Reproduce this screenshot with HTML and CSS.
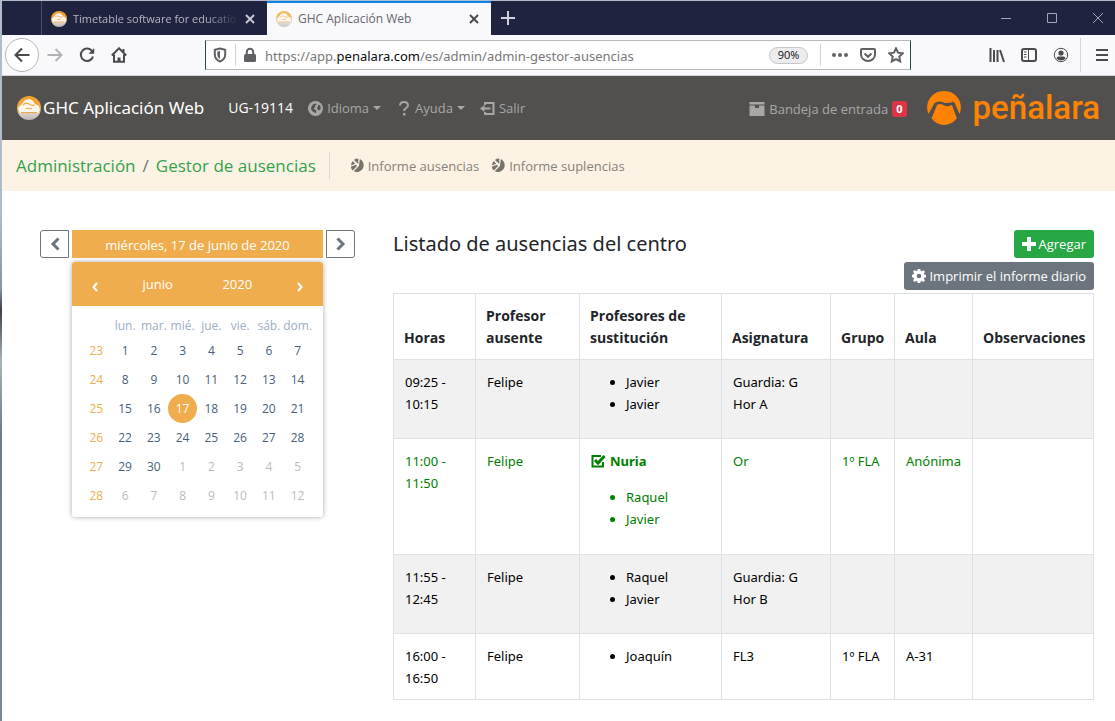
FILE: index.html
```html
<!DOCTYPE html>
<html lang="es">
<head>
<meta charset="utf-8">
<title>GHC Aplicación Web</title>
<link rel="stylesheet" href="styles.css">
</head>
<body>
<svg class="defs" width="0" height="0" aria-hidden="true">
  <defs>
    <linearGradient id="ball" x1="0" y1="0" x2="0" y2="1">
      <stop offset="0" stop-color="#f0a02c"/><stop offset=".5" stop-color="#f2a945"/><stop offset=".75" stop-color="#d9cfc6"/><stop offset="1" stop-color="#b9b6b8"/>
    </linearGradient>
    <symbol id="ghc" viewBox="0 0 24 24">
      <circle cx="12" cy="12" r="12" fill="url(#ball)"/>
      <path d="M1 12l4-4 3-4 5-1 3 2 2 3 4 2 1 4-2 3H3z" fill="#fdf6ea"/>
      <path d="M6 9q3-3 6-1t6 1M9 12.500h6M4 16.500h16" stroke="#efaa4c" stroke-width="1.200" fill="none"/>
    </symbol>
    <symbol id="pie" viewBox="0 0 16 16">
      <path d="M10.500 1A7.200 7.200 0 1 1 4 14.200L9.500 8.500z"/>
      <path d="M8.800 .5v6L4.200 2A7 7 0 0 1 8.800 .5zM3 3.200L5.500 6 1.200 8A6 6 0 0 1 3 3.200zM.8 9.300L6.500 7.200 7.500 8.500 3 13.200A6 6 0 0 1 .8 9.300z"/>
    </symbol>
  </defs>
</svg>
<div class="window">
  <header class="tabs">
    <div class="tab tab-idle">
      <svg class="favicon"><use href="#ghc"/></svg>
      <span class="tab-title">Timetable software for educatio</span>
      <button class="tab-close" aria-label="Cerrar pestaña"><svg width="10" height="10"><path d="M1 1l8 8M9 1l-8 8"/></svg></button>
    </div>
    <div class="tab tab-active">
      <svg class="favicon"><use href="#ghc"/></svg>
      <span class="tab-title">GHC Aplicación Web</span>
      <button class="tab-close" aria-label="Cerrar pestaña"><svg width="10" height="10"><path d="M1 1l8 8M9 1l-8 8"/></svg></button>
    </div>
    <button class="tab-new" aria-label="Nueva pestaña"><svg width="14" height="14"><path d="M7 0v14M0 7h14"/></svg></button>
    <div class="win-controls">
      <button aria-label="Minimizar"><svg width="10" height="10"><path d="M0 5.500h10"/></svg></button>
      <button aria-label="Maximizar"><svg width="10" height="10"><path d="M.5 .5h9v9h-9z"/></svg></button>
      <button aria-label="Cerrar"><svg width="10" height="10"><path d="M0 0l10 10M10 0L0 10"/></svg></button>
    </div>
  </header>

  <div class="toolbar">
    <button class="back" aria-label="Atrás"><svg width="16" height="16"><path d="M15.500 8H1.500M8 1.500L1.500 8 8 14.500"/></svg></button>
    <button class="tool faded" aria-label="Adelante"><svg width="16" height="16"><path d="M.5 8h14M8.500 2l6 6-6 6"/></svg></button>
    <button class="tool" aria-label="Recargar"><svg width="16" height="16"><path d="M13.300 4.500A6.200 6.200 0 1 0 14 9.500"/><path d="M15.200 1v5.800H9.500z" class="solid"/></svg></button>
    <button class="tool" aria-label="Inicio"><svg width="16" height="16"><path d="M.8 8.500L8 1.300l7.200 7.200M3 7.500v7.300h10V7.500"/><path d="M6.500 15v-4.500h3V15zM11.500 2h2v3h-2z" class="solid"/></svg></button>
    <div class="urlbar">
      <svg class="url-shield" width="14" height="16"><path d="M7 1.500l5.200 1.300v4.700c0 3.500-2 5.700-5.200 7-3.200-1.300-5.200-3.500-5.200-7V2.800z"/><path d="M7 4v8c-1.800-.9-2.700-2.500-2.700-4.500V4.600z" class="solid"/></svg>
      <span class="rule"></span>
      <svg class="url-lock" width="14" height="16"><path d="M3.800 8V5a3.200 3.200 0 0 1 6.400 0v3"/><rect x="1" y="7" width="12" height="8" rx="1.500" class="solid"/></svg>
      <span class="url">https://app.<b>penalara.com</b>/es/admin/admin-gestor-ausencias</span>
      <button class="zoom">90%</button>
      <span class="rule"></span>
      <button class="url-tool" aria-label="Más acciones"><svg width="18" height="16"><g class="solid"><circle cx="3" cy="8" r="2"/><circle cx="9" cy="8" r="2"/><circle cx="15" cy="8" r="2"/></g></svg></button>
      <button class="url-tool" aria-label="Pocket"><svg width="16" height="16"><path d="M2 2h12q1 0 1 1v4.500a7 6.500 0 0 1-14 0V3q0-1 1-1zM4.500 6.500L8 9.800l3.500-3.300"/></svg></button>
      <button class="url-tool" aria-label="Marcador"><svg width="16" height="16"><path d="M8 1.300l2 4.400 4.800.6-3.500 3.300.9 4.800L8 12.100l-4.200 2.300.9-4.800L1.200 6.300 6 5.700z"/></svg></button>
    </div>
    <button class="tool" aria-label="Biblioteca"><svg width="16" height="16"><path d="M1.500 1v14M5 3v12M8.500 3v12M11 3l4 12"/></svg></button>
    <button class="tool" aria-label="Barra lateral"><svg width="16" height="16"><rect x="1" y="2" width="14" height="12" rx="2"/><path d="M7.500 2v12M3 5h2.500M3 7.500h2.500M3 10h2.500" class="thin"/></svg></button>
    <button class="tool" aria-label="Cuenta"><svg width="16" height="16"><circle cx="8" cy="8" r="6.700" class="thin"/><circle cx="8" cy="6" r="2.600" class="solid"/><path d="M3.500 11.500q0-2 2-2h5q2 0 2 2A6 6 0 0 1 8 13.500a6 6 0 0 1-4.500-2z" class="solid"/></svg></button>
    <span class="rule rule-tall"></span>
    <button class="tool menu" aria-label="Menú"><svg width="12" height="14"><path d="M0 2h12M0 7h12M0 12h12"/></svg></button>
  </div>

  <nav class="navbar">
    <a class="brand" href="#"><svg class="brand-icon"><use href="#ghc"/></svg>GHC Aplicación Web</a>
    <span class="user">UG-19114</span>
    <button class="nav-link"><svg width="15" height="15" viewBox="0 0 15 15"><circle cx="7.500" cy="7.500" r="7.500" class="ico"/><path d="M5.500 3l2.500-.6.5 1.400-1.600 1-.1 1.700-1.300 1.500 2.800 1.300-.4 3-3-1.800L3 8.500l.5-3zM9.800 3.500l2.400 1 .6 3-1.400 2-2-1.200-.4-2 1.400-1z" class="cut"/></svg><span>Idioma</span><i class="caret"></i></button>
    <button class="nav-link nav-help"><svg width="10" height="15" viewBox="0 0 10 15"><path d="M1 4.500Q1.200 1 5 1t4 3.200Q9 6 6.700 7.300 5.200 8.200 5.200 10" class="line"/><rect x="4" y="12" width="2.500" height="2.500" class="ico"/></svg><span>Ayuda</span><i class="caret"></i></button>
    <a class="nav-link" href="#"><svg width="15" height="13" viewBox="0 0 15 13"><path d="M5 3V1h8.500v11H5v-2M3 6.500h7.500" class="line"/><path d="M4.500 3v7L0 6.500z" class="ico"/></svg><span>Salir</span></a>
    <a class="nav-link inbox" href="#"><svg width="16" height="14" viewBox="0 0 16 14"><path d="M.5 0h15v2.500H.5zM.5 3.500H6V6h4V3.500h5.500V14H.5z" class="ico"/></svg><span>Bandeja de entrada</span><b class="badge">0</b></a>
    <a class="logo" href="#"><svg width="34" height="34" viewBox="0 0 34 34"><path d="M17 0C22 0 27 2 30.500 6.500 34 11 35 17 32.500 23L27.500 11.500 17 12 7.500 12 1.500 23C-1 17 0 11 3.500 6.500 7 2 12 0 17 0z" fill="#ff8300"/><path d="M10 14Q13 12 17 14.200T25 13.500L30 27Q25 34 17 34T4.500 27z" fill="#ff8300"/><path d="M4 26L8.800 12.700Q12.500 10.500 17 12.800T25.500 12L30.500 26" fill="none" stroke="#52504e" stroke-width="2"/></svg><span>peñalara</span></a>
  </nav>

  <nav class="crumbs" aria-label="Ruta">
    <a class="crumb" href="#">Administración</a><span class="slash">/</span><a class="crumb" href="#">Gestor de ausencias</a>
    <span class="crumb-rule"></span>
    <a class="report" href="#"><svg><use href="#pie"/></svg>Informe ausencias</a>
    <a class="report" href="#"><svg><use href="#pie"/></svg>Informe suplencias</a>
  </nav>

  <main class="content">
    <section class="picker">
      <button class="step step-prev" aria-label="Día anterior"><svg width="10" height="14"><path d="M8.500 1.500L3 7l5.500 5.500"/></svg></button>
      <div class="picker-body">
        <button class="date">miércoles, 17 de junio de 2020</button>
        <div class="calendar">
          <div class="cal-head">
            <button aria-label="Mes anterior"><svg width="6" height="10"><path d="M5 1L1.500 5 5 9"/></svg></button>
            <button>junio</button>
            <button>2020</button>
            <button aria-label="Mes siguiente"><svg width="6" height="10"><path d="M1 1l3.500 4L1 9"/></svg></button>
          </div>
          <table class="days">
            <thead><tr><th></th><th>lun.</th><th>mar.</th><th>mié.</th><th>jue.</th><th>vie.</th><th>sáb.</th><th>dom.</th></tr></thead>
            <tbody>
              <tr><th>23</th><td>1</td><td>2</td><td>3</td><td>4</td><td>5</td><td>6</td><td>7</td></tr>
              <tr><th>24</th><td>8</td><td>9</td><td>10</td><td>11</td><td>12</td><td>13</td><td>14</td></tr>
              <tr><th>25</th><td>15</td><td>16</td><td class="today">17</td><td>18</td><td>19</td><td>20</td><td>21</td></tr>
              <tr><th>26</th><td>22</td><td>23</td><td>24</td><td>25</td><td>26</td><td>27</td><td>28</td></tr>
              <tr><th>27</th><td>29</td><td>30</td><td class="out">1</td><td class="out">2</td><td class="out">3</td><td class="out">4</td><td class="out">5</td></tr>
              <tr><th>28</th><td class="out">6</td><td class="out">7</td><td class="out">8</td><td class="out">9</td><td class="out">10</td><td class="out">11</td><td class="out">12</td></tr>
            </tbody>
          </table>
        </div>
      </div>
      <button class="step step-next" aria-label="Día siguiente"><svg width="10" height="14"><path d="M1.500 1.500L7 7l-5.500 5.500"/></svg></button>
    </section>

    <section class="list">
      <div class="list-head">
        <h1>Listado de ausencias del centro</h1>
        <div class="actions">
          <button class="btn btn-add"><svg width="14" height="14"><path d="M5 0h4v5h5v4H9v5H5V9H0V5h5z"/></svg>Agregar</button>
          <button class="btn btn-print"><svg width="14" height="14" viewBox="0 0 14 14"><path fill-rule="evenodd" d="M5.700 0h2.600l.4 1.900 1 .4L11.400 1.200l1.600 1.600-1.100 1.700.4 1 1.700.4v2.400l-1.700.4-.4 1 1.100 1.700-1.600 1.600-1.700-1.100-1 .4-.4 1.700H5.700l-.4-1.700-1-.4-1.700 1.100L1 11.400l1.100-1.700-.4-1L0 8.300V5.700l1.700-.4.4-1L1 2.600 2.600 1l1.700 1.100 1-.4zM7 4.700A2.300 2.300 0 1 0 7 9.300 2.300 2.300 0 0 0 7 4.700z"/></svg>Imprimir el informe diario</button>
        </div>
      </div>
      <table class="absences">
        <colgroup><col class="c-hour"><col class="c-absent"><col class="c-subs"><col class="c-subject"><col class="c-group"><col class="c-room"><col></colgroup>
        <thead><tr><th>Horas</th><th>Profesor ausente</th><th>Profesores de sustitución</th><th>Asignatura</th><th>Grupo</th><th>Aula</th><th>Observaciones</th></tr></thead>
        <tbody>
          <tr><td>09:25 - 10:15</td><td>Felipe</td><td><ul><li>Javier</li><li>Javier</li></ul></td><td>Guardia: G<br>Hor A</td><td></td><td></td><td></td></tr>
          <tr class="assigned"><td>11:00 - 11:50</td><td>Felipe</td><td><p><svg width="15" height="14" viewBox="0 0 15 14"><path d="M10 2H1.500v10.500H12V8"/><path d="M4 6l3 3 6.500-7" class="tick"/></svg>Nuria</p><ul><li>Raquel</li><li>Javier</li></ul></td><td>Or</td><td>1º FLA</td><td>Anónima</td><td></td></tr>
          <tr><td>11:55 - 12:45</td><td>Felipe</td><td><ul><li>Raquel</li><li>Javier</li></ul></td><td>Guardia: G<br>Hor B</td><td></td><td></td><td></td></tr>
          <tr><td>16:00 - 16:50</td><td>Felipe</td><td><ul><li>Joaquín</li></ul></td><td>FL3</td><td>1º FLA</td><td>A-31</td><td></td></tr>
        </tbody>
      </table>
    </section>
  </main>
</div>
</body>
</html>
```
FILE: styles.css
```css
* { box-sizing: border-box; }

body {
  margin: 0;
  background: #fff;
  color: #212529;
  font: 13px/22px "Open Sans", "Noto Sans", sans-serif;
}

button {
  display: inline-flex;
  align-items: center;
  justify-content: center;
  margin: 0;
  padding: 0;
  border: 0;
  background: none;
  color: inherit;
  font: inherit;
}

a { text-decoration: none; }
svg { display: block; flex: none; fill: none; stroke: none; }
.defs { position: absolute; }

.window {
  min-height: 100vh;
  border-left: 2px solid;
  border-image: linear-gradient(#aebccb 0 30%, #8894a0 40%, #3c4249 43%, #a9b4bc 50%, #6f7c85 60%, #7b8a92) 1;
}

/* Tab strip */
.tabs {
  display: flex;
  height: 35px;
  border-top: 1px solid #aebccb;
  background: #20233f;
}
.tab {
  display: flex;
  align-items: center;
  gap: 6px;
  padding: 2px 12px 0 9px;
  font-size: 12px;
}
.tab-idle {
  width: 226px;
  margin-left: 39px;
  border-left: 1px solid #4d4f68;
  color: #b5b5c2;
}
.tab-idle .tab-title {
  font-size: 11px;
  -webkit-mask-image: linear-gradient(90deg, #000 80%, transparent);
  mask-image: linear-gradient(90deg, #000 80%, transparent);
}
.tab-active {
  width: 224px;
  box-shadow: inset 0 2px #1183ea;
  background: #f9f9fb;
  color: #66666c;
}
.tab-title { flex: 1; overflow: hidden; white-space: nowrap; }
.favicon { width: 16px; height: 16px; }
.tab-active .favicon { opacity: .75; }
.tab-close svg, .tab-new svg { stroke: currentColor; stroke-width: 2; }
.tab-idle .tab-close { color: #c8c8d2; }
.tab-active .tab-close { color: #4a4a4f; }
.tab-new { width: 34px; color: #d0d0da; }
.win-controls { display: flex; margin-left: auto; }
.win-controls button { width: 46px; }
.win-controls button:last-child { width: 40px; padding-left: 6px; }
.win-controls svg { stroke: #a5a6b5; }

/* Toolbar */
.toolbar {
  display: flex;
  align-items: center;
  height: 41px;
  padding-left: 3px;
  border-bottom: 1px solid #d6d6da;
  background: #f9f9fb;
}
.toolbar svg { stroke: #4b4b4f; stroke-width: 2; }
.toolbar .solid { fill: #4b4b4f; stroke: none; }
.toolbar .thin { stroke-width: 1; }
.back { width: 34px; height: 34px; border: 1px solid #b5b5b8; border-radius: 50%; background: #fff; }
.tool { width: 32px; height: 32px; }
.tool.menu { width: 26px; }
.faded { opacity: .4; }
.rule { width: 1px; height: 22px; background: #d4d4d8; }
.rule-tall { height: 34px; margin: 0 8px 0 3px; }
.urlbar {
  display: flex;
  flex: 1;
  align-items: center;
  height: 30px;
  margin: 0 70px;
  padding-left: 7px;
  border: 1px solid #b9b9bd;
  border-left-color: #1c4a48;
  border-right-color: #1c4a48;
  background: #fff;
}
.urlbar svg { stroke: #606065; }
.urlbar .solid { fill: #606065; }
.url-shield { margin-right: 8px; }
.url-lock { margin: 0 8px 0 7px; }
.url { flex: 1; padding-top: 2px; color: #77777b; font-family: "Noto Sans", sans-serif; white-space: nowrap; overflow: hidden; }
.url b { color: #0c0c0d; font-weight: 400; }
.zoom {
  width: 39px;
  height: 17px;
  margin-right: 12px;
  border: 1px solid #c6c6ca;
  border-radius: 9px;
  background: #ececee;
  color: #0c0c0d;
  font-size: 11px;
}
.url-tool { width: 28px; height: 28px; }
.rule + .url-tool { margin-left: 5px; }

/* Application bar */
.navbar {
  display: flex;
  align-items: center;
  height: 64px;
  padding: 0 15px;
  background: #52504e;
  color: #fff;
}
.brand { display: flex; align-items: center; gap: 2px; color: #fff; font-family: "Noto Sans", sans-serif; font-size: 17px; }
.brand-icon { width: 24px; height: 24px; }
.user { margin: 0 15px 0 24px; font-size: 14px; }
.nav-link { display: flex; align-items: center; gap: 4px; color: #a8a7a6; }
.ico { fill: #a8a7a6; }
.cut { fill: #52504e; }
.line { stroke: #a8a7a6; stroke-width: 2; }
.caret { border: 4px solid transparent; border-top-color: currentColor; border-bottom: 0; }
.nav-help { margin: 0 15px 0 18px; }
.nav-help svg { margin-right: 2px; }
.inbox { margin-left: auto; padding-top: 2px; }
.badge {
  padding: 0 4px;
  border-radius: 3px;
  background: #dc3545;
  color: #fff;
  font-size: 11px;
  line-height: 16px;
}
.logo {
  display: flex;
  align-items: center;
  gap: 12px;
  margin-left: 20px;
  color: #ff8300;
  font: 500 33px/40px Roboto, sans-serif;
}

/* Breadcrumb */
.crumbs { display: flex; align-items: center; height: 51px; padding: 0 14px; background: #fdf3e4; }
.crumb { color: #31a24c; font-size: 17px; }
.slash { margin: 0 7px; color: #6c757d; font-size: 17px; }
.crumb-rule { width: 1px; height: 27px; margin: 0 20px 0 13px; background: #dddad5; }
.report { display: flex; gap: 3px; margin-right: 12px; align-items: center; color: #85817b; }
.report svg { width: 15px; height: 15px; fill: #76726c; }

/* Page body */
.content {
  display: grid;
  grid-template-columns: 315px 1fr;
  gap: 38px;
  align-items: start;
  padding: 39px 21px 21px 38px;
}
.picker { display: flex; gap: 3px; align-items: flex-start; }
.picker-body { flex: 1; }
.step { width: 29px; height: 28px; border: 1px solid #6c757d; }
.step-prev { border-radius: 3px 0 0 3px; }
.step-next { border-radius: 0 3px 3px 0; }
.step svg { stroke: #6c757d; stroke-width: 3; }
.date { width: 100%; height: 28px; padding-top: 2px; background: #f0ad4e; color: #fff; }
.calendar { margin-top: 4px; border-radius: 3px; box-shadow: 0 0 5px rgba(0, 0, 0, .35); }
.cal-head {
  display: grid;
  grid-template-columns: 46px 1fr 1fr 46px;
  height: 44px;
  border-radius: 3px 3px 0 0;
  background: #f0ad4e;
  color: #fff;
}
.cal-head svg { margin-top: 6px; stroke: #fff; stroke-width: 2; }
.days {
  width: 100%;
  padding: 10px 11px 7px 10px;
  border-spacing: 0;
  table-layout: fixed;
  color: #475f7b;
  font-size: 12px;
  text-align: center;
}
.days th, .days td { height: 29px; padding: 0; line-height: 20px; overflow: visible; white-space: nowrap; }
.days th { color: #f0ad4e; font-weight: 400; }
.days thead th { height: 20px; color: #9caec2; }
.days .today { border-radius: 50%; background: #f0ad4e; color: #fff; }
.days .out { color: #bcbcbc; }

.list-head { display: flex; justify-content: space-between; margin-bottom: 3px; }
h1 { margin: 0; font-family: "Noto Sans", sans-serif; font-size: 20px; font-weight: 400; line-height: 28px; }
.actions { display: flex; flex-direction: column; align-items: flex-end; gap: 4px; }
.btn { gap: 3px; height: 28px; padding: 0 8px; border-radius: 3px; color: #fff; }
.btn svg { fill: #fff; }
.btn-add { background: #28a745; }
.btn-print { background: #6c757d; }

.absences {
  width: 100%;
  border-collapse: collapse;
  table-layout: fixed;
  color: #000;
  font-family: "Noto Sans", sans-serif;
}
.absences th, .absences td {
  padding: 11px 8px 10px 11px;
  border: 1px solid #dee2e6;
  text-align: left;
  vertical-align: top;
}
.absences th { padding-left: 10px; color: #212529; font-family: "Open Sans", sans-serif; font-size: 14px; vertical-align: bottom; }
.absences tbody tr:nth-child(odd) { background: #f1f1f1; }
.absences ul { margin: 0 0 13px; padding-left: 35px; }
.absences tr:last-child ul { margin-bottom: 0; }
.absences p { display: flex; align-items: center; gap: 4px; margin: 0 0 14px; font-weight: 700; }
.absences p svg { stroke: #008000; stroke-width: 2; }
.absences .tick { stroke-width: 3; }
.absences .assigned { color: #008000; }
.absences .assigned ul { margin-bottom: 14px; }
.c-hour { width: 82px; }
.c-absent { width: 104px; }
.c-subs { width: 142px; }
.c-subject { width: 109px; }
.c-group { width: 64px; }
.c-room { width: 78px; }
```
